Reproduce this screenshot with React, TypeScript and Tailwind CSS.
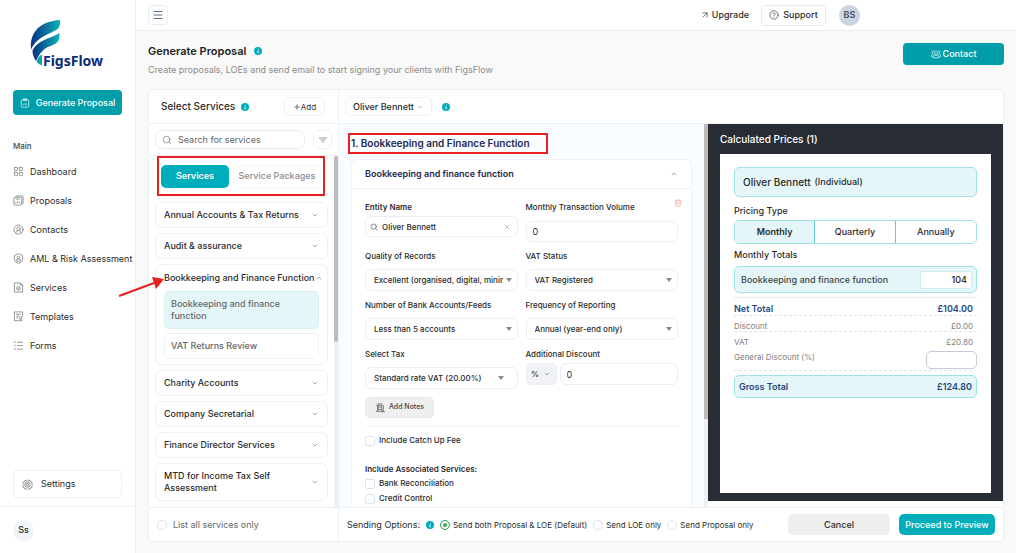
import type { ReactNode } from 'react';
import { ArrowUpRight, ChevronDown, ChevronUp, CircleHelp, CircleUserRound, LayoutGrid, Menu, Plus, Search, Trash2, X } from 'lucide-react';

const navItems = [
    { label: 'Dashboard', icon: 'dashboard' },
    { label: 'Proposals', icon: 'proposals' },
    { label: 'Contacts', icon: 'contacts' },
    { label: 'AML & Risk Assessment', icon: 'aml' },
    { label: 'Services', icon: 'services' },
    { label: 'Templates', icon: 'templates' },
    { label: 'Forms', icon: 'forms' }
];

const servicesBefore = ['Annual Accounts & Tax Returns', 'Audit & assurance'];
const servicesAfter = ['Charity Accounts', 'Company Secretarial', 'Finance Director Services', 'MTD for Income Tax Self Assessment'];

const iconPaths: Record<string, ReactNode> = {
    proposals: (
        <>
            <path d="M7 5V3a1 1 0 0 1 1-1h13a1 1 0 0 1 1 1v15a1 1 0 0 1-1 1h-2" />
            <rect x="2" y="5" width="17" height="17" rx="2" />
            <path d="M6 9h9M6 18v-3M10 18v-5M14 18v-3" />
        </>
    ),
    aml: (
        <>
            <path d="M12 1.500l9 4v8c0 4-4 7.500-9 9.500-5-2-9-5.500-9-9.500v-8z" />
            <circle cx="12" cy="10" r="3" />
            <path d="M7 18v-1.500a3 3 0 0 1 3-3h4a3 3 0 0 1 3 3V18z" />
        </>
    ),
    services: (
        <>
            <path d="M3 2h13l5 5v15H3z" />
            <path d="M16 2v5h5" />
            <circle cx="12" cy="14" r="4" />
            <circle cx="12" cy="14" r="1" />
        </>
    ),
    templates: (
        <>
            <path d="M13 21H3V2h18v10M7 7h10M7 11h6M7 15h4" />
            <circle cx="17" cy="15" r="3" />
            <path d="M15 18v4l2-1 2 1v-4" />
        </>
    ),
    forms: <path d="M9 5h13M9 12h13M9 20h13M2 5l1.500 1.500L6 3M2 12l1.500 1.500L6 10M2 20l1.500 1.500L6 18" />,
    settings: (
        <>
            <path d="M12 1.500l2.500 2.200 3.300-.7 1.200 3.100 3.100 1.200-.7 3.200L23 12l-1.600 2.500.7 3.200-3.100 1.200-1.200 3.100-3.300-.7-2.500 2.200-2.500-2.200-3.300.7L5 18.900l-3.100-1.200.7-3.200L1 12l1.600-1.500-.7-3.200L5 6.100 6.200 3l3.300.7z" />
            <circle cx="12" cy="12" r="6" />
            <rect x="9.500" y="9.500" width="5" height="5" rx="1" />
        </>
    ),
    clipboard: (
        <>
            <rect x="3" y="4" width="18" height="18" rx="3" />
            <path d="M8 2h8v4H8zM8 17v-3M12 17v-5M16 17v-4" />
        </>
    ),
    group: (
        <>
            <circle cx="12" cy="9" r="4" />
            <path d="M5 21v-2a4 4 0 0 1 4-4h6a4 4 0 0 1 4 4v2zM6 12a4 4 0 0 1 1-8M18 12a4 4 0 0 0-1-8M4 19H1v-2a4 4 0 0 1 3-4M20 19h3v-2a4 4 0 0 0-3-4" />
        </>
    ),
    notes: <path d="M3 5h3v15H2M8 2h8v14H8zM10 6h4M10 10h4M18 6h2v11M6 20h12M18 17l5 4h-7z" />
};

const Icon = ({ name, className }: { name: string; className: string }) => {
    if (name === 'dashboard') return <LayoutGrid className={className} strokeWidth={1.5} />;
    if (name === 'contacts') return <CircleUserRound className={className} strokeWidth={1.5} />;
    return (
        <svg viewBox="0 0 24 24" fill="none" stroke="currentColor" strokeWidth="1.6" strokeLinejoin="round" className={className}>
            {iconPaths[name]}
        </svg>
    );
};

const Info = () => (
    <svg viewBox="0 0 16 16" className="h-2 w-2 shrink-0" role="img" aria-label="Info">
        <circle cx="8" cy="8" r="8" fill="#00adbb" />
        <path d="M9 3.500v1.500M7 7.500h1.500l-1 4.500h1.500" stroke="#fff" strokeWidth="1.600" fill="none" />
    </svg>
);

const Logo = () => (
    <svg viewBox="0 0 76 50" className="ml-[30px] h-[50px] w-[76px]">
        <defs>
            <linearGradient id="leaf" x1="0" y1="0" x2="1" y2="0">
                <stop offset="0" stopColor="#0a3184" />
                <stop offset="0.500" stopColor="#0b6f9c" />
                <stop offset="1" stopColor="#0bb5b8" />
            </linearGradient>
        </defs>
        <path d="M30 1c.3 4-.2 7-2 8.500C23 14.500 8 16 1 30.500-.5 14 9 2.500 30 1z" fill="url(#leaf)" />
        <path d="M29.500 14c.3 4-.3 7.500-2.500 9.500-4 3.500-10 3.500-14.500 8.500-2.500 2.500-4.500 5.500-6.500 10-2-3-3.500-6.500-3.500-10.500C8 20.500 20 20 29.500 14z" fill="url(#leaf)" />
        <path d="M12 35.500c-2.500 1-4 3-5.500 7 1.500 2 3 3 5.500 4z" fill="#0ba5b0" />
        <text x="13" y="47" fontSize="14" fontWeight="700" fill="#0b2a7c" className="font-['Noto_Sans',sans-serif]">
            FigsFlow
        </text>
    </svg>
);

const Sidebar = () => (
    <aside className="flex w-[136px] shrink-0 flex-col border-r border-[#eeeeee] bg-white pt-[19px]">
        <Logo />
        <div className="px-[13px] pt-[21px]">
            <button className="flex h-[25px] w-full items-center justify-center gap-1.5 rounded-[4px] bg-[#009eab] text-[9px] font-medium whitespace-nowrap text-white">
                <Icon name="clipboard" className="h-2.5 w-2.5 shrink-0" />
                Generate Proposal
            </button>
        </div>
        <div className="px-[13px] pt-6 text-[8px] leading-[14px] font-medium text-[#454545]">Main</div>
        <nav className="flex flex-col pt-1">
            {navItems.map(item => (
                <a key={item.label} href="#" className="flex h-[29px] items-center gap-1.5 pl-[13px] text-[9px] whitespace-nowrap">
                    <Icon name={item.icon} className="h-[11px] w-[11px] shrink-0 text-[#757575]" />
                    {item.label}
                </a>
            ))}
        </nav>
        <div className="mt-auto px-[13px] pb-2">
            <a href="#" className="flex h-7 items-center gap-2 rounded-[4px] border border-[#edf0f6] px-2 text-[9px]">
                <Icon name="settings" className="h-[11px] w-[11px] text-[#757575]" />
                Settings
            </a>
        </div>
        <div className="flex h-[47px] items-center border-t border-[#edf0f6] pl-[13px]">
            <div className="flex h-[21px] w-[21px] items-center justify-center rounded-full bg-[#f1f5fa] text-[9px] font-medium">Ss</div>
        </div>
    </aside>
);

const TopBar = () => (
    <header className="flex h-[31px] shrink-0 items-center border-b border-[#ececec] bg-white pr-[156px] pl-3">
        <button aria-label="Menu" className="flex h-5 w-5 items-center justify-center rounded-[4px] border border-[#e8edf4]">
            <Menu className="h-3 w-3 text-[#5b6f8a]" />
        </button>
        <a href="#" className="ml-auto flex items-center gap-0.5 text-[9px] font-medium">
            <ArrowUpRight className="h-2.5 w-2.5" strokeWidth={1.5} />
            Upgrade
        </a>
        <button className="ml-3 flex h-[21px] w-[65px] items-center justify-center gap-1 rounded-[4px] border border-[#ececec] text-[9px] font-medium">
            <CircleHelp className="h-2.5 w-2.5" strokeWidth={1.5} />
            Support
        </button>
        <div className="ml-[13px] flex h-[21px] w-[21px] items-center justify-center rounded-full bg-[#cbd5e1] text-[9px] font-semibold text-[#475060]">BS</div>
    </header>
);

const ServiceRow = ({ label }: { label: string }) => (
    <button className="flex min-h-[26px] shrink-0 items-center justify-between rounded-[6px] border border-[#edf1f8] px-2 py-1.5 text-left text-[9px] leading-[12px] font-medium">
        <span className="max-w-[135px]">{label}</span>
        <ChevronDown className="h-2 w-2 shrink-0 text-[#71809a]" />
    </button>
);

const ServicesPanel = () => (
    <section className="flex w-[190px] shrink-0 flex-col border-r border-[#edf1f8]">
        <div className="flex h-[34px] shrink-0 items-center border-b border-[#edf1f8] pr-[13px] pl-3">
            <h2 className="mr-1.5 text-[10px] font-medium">Select Services</h2>
            <Info />
            <button className="ml-auto flex h-[19px] w-[41px] items-center justify-center rounded-[5px] border border-[#edf1f8] text-[8px] text-[#333]">
                <Plus className="h-2 w-2" />
                Add
            </button>
        </div>
        <div className="flex h-8 shrink-0 items-center justify-between border-b border-[#edf1f8] px-1.5">
            <label className="flex h-[19px] w-[150px] items-center gap-1.5 rounded-[7px] border border-[#e8edf4] px-1.5">
                <Search className="h-2.5 w-2.5 shrink-0 text-[#666]" strokeWidth={1.5} />
                <input type="text" aria-label="Search for services" placeholder="Search for services" className="w-full min-w-0 text-[9px] outline-none placeholder:text-[#666]" />
            </label>
            <button aria-label="Filter" className="flex h-[19px] w-[19px] items-center justify-center rounded-[5px] border border-[#edf1f8]">
                <svg viewBox="0 0 8 6" className="h-1.5 w-2" stroke="#999" strokeWidth="1">
                    <path d="M0 1h8M1.500 3h5M3 5h2" />
                </svg>
            </button>
        </div>
        <div className="flex min-h-0 flex-1">
            <div className="flex min-w-0 flex-1 flex-col gap-[5px] overflow-hidden pr-1.5 pl-1.5">
                {/* highlighted switch between services and packages */}
                <div className="mb-px ml-0.5 flex h-10 w-[168px] shrink-0 items-center gap-1 border-2 border-[#e8201f] px-0.5">
                    <button className="h-[23px] w-[68px] rounded-[5px] bg-[#00adbb] text-[9px] font-semibold text-white">Services</button>
                    <button className="h-[23px] flex-1 rounded-[5px] border border-[#f4f6fa] text-[9px] font-medium whitespace-nowrap text-[#8b8b8b]">Service Packages</button>
                </div>
                {servicesBefore.map(label => (
                    <ServiceRow key={label} label={label} />
                ))}
                <div className="shrink-0 rounded-[6px] border border-[#edf1f8] px-2 pb-[5px]">
                    <button className="flex h-[26px] w-full items-center justify-between text-[9px] font-medium whitespace-nowrap">
                        Bookkeeping and Finance Function
                        <ChevronUp className="h-2 w-2 shrink-0 text-[#71809a]" />
                    </button>
                    <button className="block w-full rounded-[5px] border border-[#d9f0f1] bg-[#e4f6f7] px-1.5 py-1.5 text-left text-[9px] leading-[12px] font-medium text-[#666]">
                        <span className="block max-w-[125px]">Bookkeeping and finance function</span>
                    </button>
                    <button className="mt-1 block h-[26px] w-full rounded-[5px] border border-[#edf1f8] px-1.5 text-left text-[9px] font-medium text-[#666]">VAT Returns Review</button>
                </div>
                {servicesAfter.map(label => (
                    <ServiceRow key={label} label={label} />
                ))}
            </div>
            <div className="w-1 shrink-0 bg-[#f0f0f0]">
                <div className="h-[53%] rounded-full bg-[#c2b9ba]" />
            </div>
        </div>
        <label className="flex h-[34px] shrink-0 items-center gap-1.5 border-t border-[#edf1f8] pl-2 text-[9px] text-[#666]">
            <input type="radio" name="list" className="h-2.5 w-2.5 appearance-none rounded-full border border-[#dde2ea]" />
            List all services only
        </label>
    </section>
);

type SelectProps = { id: string; label: string; value: string; caret?: string };

const SelectField = ({ id, label, value, caret = 'right-1.5' }: SelectProps) => (
    <div>
        <label htmlFor={id} className="block text-[8px] leading-[12px] font-medium">
            {label}
        </label>
        <div className="relative mt-[7px]">
            <select id={id} className="block h-[22px] w-full appearance-none rounded-[6px] border border-[#e8edf6] pr-3.5 pl-2 text-[8px] font-medium">
                <option>{value}</option>
            </select>
            <svg viewBox="0 0 6 4" className={`pointer-events-none absolute top-1/2 h-1 w-1.5 -translate-y-1/2 ${caret}`}>
                <path d="M0 0h6L3 4z" fill="#8a8a8a" />
            </svg>
        </div>
    </div>
);

const Check = ({ label }: { label: string }) => (
    <label className="flex items-center gap-1 text-[8px] leading-[15px] font-medium">
        <input type="checkbox" className="h-2.5 w-2.5 appearance-none rounded-[2px] border border-[#dfe4ee]" />
        {label}
    </label>
);

const ServiceForm = () => (
    <div className="flex min-w-0 flex-1 bg-[#fafdff]">
        <div className="min-w-0 flex-1 overflow-hidden pr-3 pl-3">
            <h2 className="mt-[9px] -ml-[3px] flex h-[21px] w-[200px] items-center border-2 border-[#e8201f] pl-px text-[10px] font-semibold whitespace-nowrap text-[#1c2950]">
                1. Bookkeeping and Finance Function
            </h2>
            <div className="mt-[5px] rounded-t-[6px] border border-b-0 border-[#edf1f8] bg-white">
                <div className="flex h-[29px] items-center justify-between border-b border-[#edf1f8] px-[13px] text-[9px] font-semibold text-[#1c2950]">
                    Bookkeeping and finance function
                    <ChevronUp className="h-2 w-2 text-[#71809a]" />
                </div>
                <div className="px-[13px] pt-3 pb-4">
                    <div className="grid grid-cols-2 gap-2">
                        <div>
                            <label htmlFor="entity" className="block text-[8px] leading-[12px] font-semibold">
                                Entity Name
                            </label>
                            <div className="mt-[3px] flex h-[21px] items-center gap-1 rounded-[6px] border border-[#e8edf6] px-1">
                                <Search className="h-2 w-2 shrink-0 text-[#555]" />
                                <input id="entity" type="text" defaultValue="Oliver Bennett" className="min-w-0 flex-1 text-[8px] font-medium outline-none" />
                                <button aria-label="Clear">
                                    <X className="mr-0.5 h-2 w-2 text-[#8a8a8a]" strokeWidth={1.5} />
                                </button>
                            </div>
                        </div>
                        <div>
                            <div className="flex justify-between">
                                <label htmlFor="volume" className="block text-[8px] leading-[12px] font-medium">
                                    Monthly Transaction Volume
                                </label>
                                <button aria-label="Delete" className="-mt-2 -mr-1">
                                    <Trash2 className="h-2 w-2 text-[#f3a5a5]" />
                                </button>
                            </div>
                            <input id="volume" type="text" defaultValue="0" className="mt-2 block h-[21px] w-full rounded-[6px] border border-[#e8edf6] px-1.5 text-[9px]" />
                        </div>
                        <SelectField id="quality" label="Quality of Records" value="Excellent (organised, digital, minimal)" />
                        <SelectField id="vat" label="VAT Status" value="VAT Registered" />
                        <SelectField id="banks" label="Number of Bank Accounts/Feeds" value="Less than 5 accounts" />
                        <SelectField id="freq" label="Frequency of Reporting" value="Annual (year-end only)" />
                        <SelectField id="tax" label="Select Tax" value="Standard rate VAT (20.00%)" caret="right-3.5" />
                        <div>
                            <label htmlFor="discount" className="block text-[8px] leading-[12px] font-medium">
                                Additional Discount
                            </label>
                            <div className="mt-[3px] flex gap-[3px]">
                                <button className="flex h-[22px] w-[31px] items-center justify-center gap-1 rounded-[5px] border border-[#e8edf6] bg-[#f1f2f5] text-[8px] font-medium">
                                    % <ChevronDown className="h-2 w-2 text-[#71809a]" />
                                </button>
                                <input id="discount" type="text" defaultValue="0" className="h-[22px] min-w-0 flex-1 rounded-[6px] border border-[#e8edf6] px-1.5 text-[9px]" />
                            </div>
                        </div>
                    </div>
                    <button className="mt-2 flex h-[21px] w-[69px] items-center justify-center gap-1 rounded-[5px] border border-[#e8e8e8] bg-[#efefef] text-[7px] font-medium text-[#444]">
                        <Icon name="notes" className="h-2.5 w-2.5" />
                        Add Notes
                    </button>
                    <hr className="mt-2 mb-1.5 border-[#edf1f8]" />
                    <Check label="Include Catch Up Fee" />
                    <p className="mt-3.5 text-[8px] leading-[14px] font-semibold">Include Associated Services:</p>
                    <Check label="Bank Reconciliation" />
                    <Check label="Credit Control" />
                </div>
            </div>
        </div>
        <div className="w-1 shrink-0 bg-[#f0f0f0]">
            <div className="h-[77%] bg-[#c2b9ba]" />
        </div>
    </div>
);

const Prices = () => (
    <aside className="mb-1.5 flex w-[295px] shrink-0 flex-col bg-[#282c34] px-3 pb-2">
        <h2 className="flex h-[30px] shrink-0 items-center text-[10px] font-medium text-white">Calculated Prices (1)</h2>
        <div className="min-h-0 flex-1 bg-white px-3.5 pt-[13px]">
            <div className="flex h-[30px] items-center gap-1 rounded-[5px] border border-[#a3e0e4] bg-[#e4f6f7] px-2 text-[10px] font-medium">
                Oliver Bennett <span className="text-[9px]">(Individual)</span>
            </div>
            <h3 className="mt-[7px] text-[9px] leading-[14px] font-medium">Pricing Type</h3>
            <div className="mt-0.5 grid h-6 grid-cols-3 divide-x divide-[#5fcdd4] overflow-hidden rounded-[5px] border border-[#a3e0e4] text-[9px] font-medium">
                <button className="bg-[#e4f6f7] font-semibold">Monthly</button>
                <button>Quarterly</button>
                <button>Annually</button>
            </div>
            <h3 className="mt-1 text-[9px] leading-[14px] font-medium">Monthly Totals</h3>
            <label className="mt-1 flex h-[27px] items-center justify-between rounded-[5px] border border-[#a3e0e4] bg-[#e4f6f7] pr-1 pl-1.5 text-[9px] font-medium text-[#444]">
                Bookkeeping and finance function
                <input type="text" defaultValue="104" className="h-[18px] w-[52px] rounded-[3px] border border-[#d0eef0] bg-white px-1 text-right text-[9px] text-[#222]" />
            </label>
            <dl className="mt-1 border-t border-[#ececec] text-[8px] text-[#808080]">
                <div className="flex h-[18px] items-center justify-between border-b border-dashed border-[#e2e2e2] pt-1 pr-1 text-[9px] font-semibold text-[#254583]">
                    <dt>Net Total</dt>
                    <dd>£104.00</dd>
                </div>
                <div className="flex h-4 items-center justify-between border-b border-dashed border-[#e2e2e2] pt-1 pr-1">
                    <dt>Discount</dt>
                    <dd>£0.00</dd>
                </div>
                <div className="flex h-[19px] items-center justify-between pr-1">
                    <dt>VAT</dt>
                    <dd>£20.80</dd>
                </div>
                <div className="flex h-5 justify-between border-b border-dashed border-[#e2e2e2]">
                    <dt>
                        <label htmlFor="general">General Discount (%)</label>
                    </dt>
                    <dd>
                        <input id="general" type="text" className="block h-[18px] w-[51px] rounded-[5px] border border-[#c3ccdc] px-1" />
                    </dd>
                </div>
            </dl>
            <div className="mt-1 flex h-[23px] items-center justify-between rounded-[5px] border border-[#a3e0e4] bg-[#e4f6f7] px-1 text-[9px] font-semibold text-[#254583]">
                <span>Gross Total</span>
                <span>£124.80</span>
            </div>
        </div>
    </aside>
);

const SendOption = ({ label, checked }: { label: string; checked?: boolean }) => (
    <label className="flex items-center gap-[3px] text-[8px] whitespace-nowrap">
        <input
            type="radio"
            name="send"
            defaultChecked={checked}
            className="h-2.5 w-2.5 appearance-none rounded-full border border-[#dde2ea] checked:border-[#3ea65a] checked:bg-[#3ea65a] checked:shadow-[inset_0_0_0_2px_white]"
        />
        {label}
    </label>
);

const ProposalPanel = () => (
    <section className="flex min-w-0 flex-1 flex-col">
        <div className="flex h-[34px] shrink-0 items-center gap-2.5 border-b border-[#edf1f8] pl-1.5">
            <button className="flex h-[19px] w-[87px] items-center justify-center gap-0.5 rounded-[5px] border border-[#edf1f8] text-[9px] font-medium">
                Oliver Bennett <ChevronDown className="h-2 w-2 text-[#888]" strokeWidth={1.5} />
            </button>
            <Info />
        </div>
        <div className="flex min-h-0 flex-1">
            <ServiceForm />
            <Prices />
        </div>
        <div className="flex h-[34px] shrink-0 items-center border-t border-[#edf1f8] pr-2 pl-2">
            <div className="flex items-center gap-1.5">
                <span className="text-[9px] whitespace-nowrap">Sending Options:</span>
                <Info />
                <SendOption label="Send both Proposal & LOE (Default)" checked />
                <SendOption label="Send LOE only" />
                <SendOption label="Send Proposal only" />
            </div>
            <button className="ml-auto h-[21px] w-[102px] rounded-[5px] bg-[#efefef] text-[9px] font-medium">Cancel</button>
            <button className="ml-[9px] h-[21px] w-24 rounded-[5px] bg-[#00adbb] text-[9px] font-medium whitespace-nowrap text-white">Proceed to Preview</button>
        </div>
    </section>
);

const App = () => (
    <div className="relative flex h-screen min-h-[553px] bg-white pr-2 font-[Inter,'Liberation_Sans',sans-serif] text-[#2b2b2b]">
        <Sidebar />
        <div className="flex min-w-0 flex-1 flex-col bg-[#f9f9f9]">
            <TopBar />
            <main className="flex min-h-0 flex-1 flex-col px-3 pb-[11px]">
                <div className="flex h-[58px] shrink-0 items-start justify-between pt-3">
                    <div>
                        <h1 className="flex items-center gap-2 text-[11px] leading-[16px] font-semibold text-[#222]">
                            Generate Proposal <Info />
                        </h1>
                        <p className="mt-1 text-[9px] leading-[14px] text-[#8b8b8b]">Create proposals, LOEs and send email to start signing your clients with FigsFlow</p>
                    </div>
                    <button className="flex h-[22px] w-[101px] items-center justify-center gap-0.5 rounded-[4px] bg-[#009eab] text-[9px] font-medium text-white">
                        <Icon name="group" className="h-2.5 w-2.5" />
                        Contact
                    </button>
                </div>
                <div className="flex min-h-0 flex-1 overflow-hidden rounded-[6px] border border-[#edf1f8] bg-white">
                    <ServicesPanel />
                    <ProposalPanel />
                </div>
            </main>
        </div>
        {/* arrow pointing at the open service group */}
        <svg viewBox="0 0 46 24" className="pointer-events-none absolute top-[275px] left-[118px] h-6 w-[46px]">
            <path d="M1 21L36 8" stroke="#e8201f" strokeWidth="2" />
            <path d="M34 2l12 2-8 10z" fill="#e8201f" />
        </svg>
    </div>
);

export default App;
